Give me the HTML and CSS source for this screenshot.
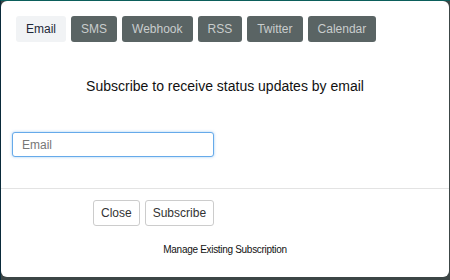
FILE: index.html
```html
<!DOCTYPE html>
<html lang="en">
<head>
    <meta charset="UTF-8">
    <meta name="viewport" content="width=device-width, initial-scale=1.0">
    <title>Subscribe</title>
    <link rel="stylesheet" href="styles.css">
</head>
<body>
    <div class="modal">
        <div class="tabs">
            <button class="tab active">Email</button>
            <button class="tab">SMS</button>
            <button class="tab">Webhook</button>
            <button class="tab">RSS</button>
            <button class="tab">Twitter</button>
            <button class="tab">Calendar</button>
        </div>
        <h2 class="title">Subscribe to receive status updates by email</h2>
        <div class="field">
            <input type="email" class="email-input" placeholder="Email">
        </div>
        <div class="footer">
            <div class="actions">
                <button class="btn">Close</button>
                <button class="btn">Subscribe</button>
            </div>
            <p class="manage">Manage Existing Subscription</p>
        </div>
    </div>
</body>
</html>
```

FILE: styles.css
```css
html, body {
    margin: 0;
    height: 100%;
}
body {
    font-family: "Liberation Sans", Arial, sans-serif;
    background-color: #3c4646;
    border-top: 1px solid #0b5e5b;
    border-left: 1px solid #0a2a3a;
    box-sizing: border-box;
}
.modal {
    background-color: #fff;
    width: 448px;
    height: 276px;
    border-radius: 6px;
    box-sizing: border-box;
    padding-top: 15px;
}
.tabs {
    display: flex;
    gap: 5px;
    padding-left: 15px;
}
.tab {
    font-family: inherit;
    font-size: 12px;
    height: 26px;
    padding: 0 10px;
    border: none;
    border-radius: 3px;
    background-color: #5a6464;
    color: #c9cdcd;
}
.tab.active {
    background-color: #f1f3f5;
    color: #1e2838;
}
.title {
    font-size: 14px;
    font-weight: normal;
    color: #111;
    text-align: center;
    margin: 36px 0 0;
}
.field {
    padding: 38px 0 0 11px;
}
.email-input {
    font-family: inherit;
    font-size: 12px;
    width: 202px;
    height: 25px;
    box-sizing: border-box;
    padding: 0 9px;
    border: 1px solid #66aaea;
    border-radius: 3px;
    box-shadow: 0 0 3px rgba(102, 170, 234, 0.6);
    outline: none;
}
.email-input::placeholder {
    color: #777;
}
.footer {
    margin-top: 31px;
    border-top: 1px solid #e3e3e3;
}
.actions {
    display: flex;
    gap: 5px;
    padding: 11px 0 0 92px;
}
.btn {
    font-family: inherit;
    font-size: 12px;
    height: 26px;
    padding: 0 7px;
    background-color: #fff;
    color: #333;
    border: 1px solid #ccc;
    border-radius: 3px;
}
.manage {
    font-size: 10px;
    letter-spacing: -0.3px;
    color: #111;
    text-align: center;
    margin: 18px 0 0;
}
```
